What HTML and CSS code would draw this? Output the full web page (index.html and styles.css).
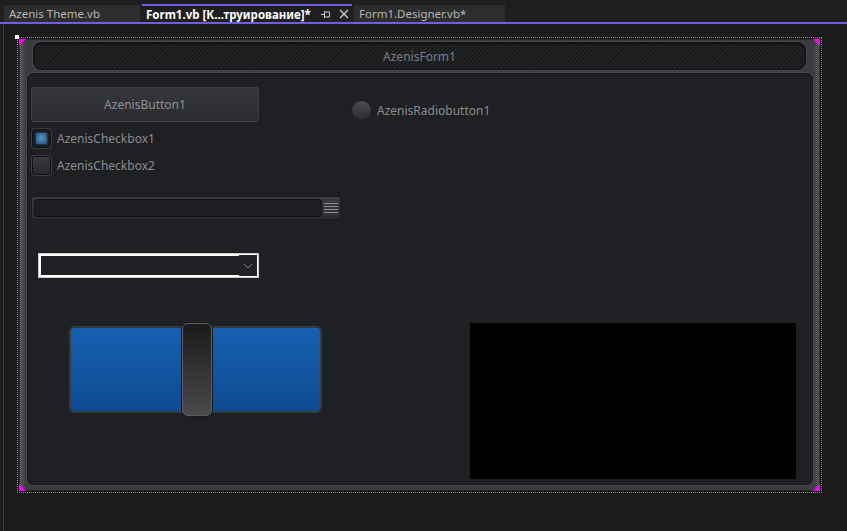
FILE: index.html
```html
<!DOCTYPE html>
<html>
<head>
<meta charset="utf-8">
<link rel="stylesheet" href="styles.css">
</head>
<body>
<div class="tabs">
  <div class="tab tab-first">Azenis Theme.vb</div>
  <div class="tab tab-active">
    <span class="tab-title">Form1.vb [К...труирование]*</span>
    <svg class="pin" width="10" height="10" viewBox="0 0 10 10"><path d="M0 5.5H3.5M3.5 2V9M3.5 3H8.5V8H3.5" fill="none" stroke="#d0d0d0" stroke-width="1"/></svg>
    <svg class="close" width="10" height="10" viewBox="0 0 10 10"><path d="M1 1L9 9M9 1L1 9" stroke="#d0d0d0" stroke-width="1.3"/></svg>
  </div>
  <div class="tab tab-other">Form1.Designer.vb*</div>
</div>
<div class="surface">
  <div class="workspace">
    <div class="selection">
      <span class="handle"></span>
      <div class="form">
        <span class="key key-tl"></span>
        <span class="key key-tr"></span>
        <span class="key key-bl"></span>
        <span class="key key-br"></span>
        <div class="titlebar">AzenisForm1</div>
        <div class="canvas">
          <div class="ctl button">AzenisButton1</div>
          <div class="ctl check check1"><span class="box box-on"><span class="tick"></span></span><span class="label">AzenisCheckbox1</span></div>
          <div class="ctl check check2"><span class="box"></span><span class="label">AzenisCheckbox2</span></div>
          <div class="ctl radio"><span class="dot"></span><span class="label">AzenisRadiobutton1</span></div>
          <div class="ctl textbox">
            <span class="field"></span>
            <svg class="grip" width="14" height="13" viewBox="0 0 14 13"><path d="M0 1.5H14M0 4.5H14M0 7.5H14M0 10.5H14" stroke="#8a8b8f" stroke-width="1"/></svg>
          </div>
          <div class="ctl combo">
            <span class="combo-field"></span>
            <span class="combo-btn"><svg width="10" height="6" viewBox="0 0 10 6"><path d="M1 1L5 5L9 1" fill="none" stroke="#8c8c8c" stroke-width="1"/></svg></span>
          </div>
          <div class="ctl slider"><span class="thumb"></span></div>
          <div class="ctl panel"></div>
        </div>
      </div>
    </div>
  </div>
</div>
</body>
</html>
```
FILE: styles.css
```css
* { box-sizing: border-box; }
html, body { margin: 0; height: 100%; }
body {
  background: #1b1b1b;
  font-family: "Noto Sans", "Open Sans", sans-serif;
  font-size: 12px;
  overflow: hidden;
  display: flex;
  flex-direction: column;
}
.tabs {
  display: flex;
  align-items: flex-end;
  height: 24px;
  background: #1f1f1f;
  border-bottom: 2px solid #6f5fe0;
  padding-left: 4px;
  gap: 2px;
}
.tab {
  height: 17px;
  display: flex;
  align-items: center;
  white-space: nowrap;
  color: #b4b4b4;
  font-size: 11.5px;
}
.tab-first { width: 136px; background: #2d2d2d; padding-left: 5px; }
.tab-active {
  width: 210px;
  height: 18px;
  border-top: 2px solid #6f5fe0;
  background: #1f1f1f;
  color: #ffffff;
  font-weight: 700;
  padding-left: 4px;
}
.tab-title { flex: none; }
.pin { margin-left: 10px; }
.close { margin-left: 8px; }
.tab-other { width: 151px; background: #2d2d2d; padding-left: 5px; }

.surface { flex: 1; padding-left: 3px; }
.workspace {
  height: 100%;
  border-left: 1px solid #3a3a3a;
  padding: 13px 0 0 13px;
}
.selection {
  position: relative;
  width: 805px;
  height: 456px;
  border: 1px dotted #8c8c8c;
  padding: 1px;
}
.handle {
  position: absolute;
  left: -3px;
  top: -3px;
  width: 4px;
  height: 4px;
  background: #ffffff;
}
.form {
  position: relative;
  height: 100%;
  border-radius: 6px;
  border: 1px solid #2a2b2e;
  background:
    linear-gradient(to right, #5c5d62 0, #47484c 3px, #3b3c40 6px, #3b3c40 calc(100% - 6px), #47484c calc(100% - 3px), #57585d 100%);
  padding: 2px 6px 5px 7px;
  display: flex;
  flex-direction: column;
  gap: 3px;
}
.key {
  position: absolute;
  width: 7px;
  height: 7px;
  background: #ff00ff;
  z-index: 2;
}
.key-tl { left: -1px; top: -1px; clip-path: polygon(0 0, 100% 0, 0 100%); }
.key-tr { right: -1px; top: -1px; clip-path: polygon(0 0, 100% 0, 100% 100%); }
.key-bl { left: -1px; bottom: -1px; clip-path: polygon(0 0, 100% 100%, 0 100%); }
.key-br { right: -1px; bottom: -1px; clip-path: polygon(100% 0, 100% 100%, 0 100%); }

.titlebar {
  margin: 0 7px 0 6px;
  height: 28px;
  border-radius: 8px;
  border: 1px solid #141416;
  background:
    repeating-linear-gradient(135deg, #19191b 0 1.5px, #242527 1.5px 3px);
  box-shadow: inset 0 1px 2px rgba(0,0,0,0.6), 0 0 0 1px #44454a;
  color: #7a7d86;
  display: flex;
  align-items: center;
  justify-content: center;
  font-size: 12px;
}
.canvas {
  position: relative;
  flex: 1;
  background: #1f2023;
  border-radius: 6px;
  border: 1px solid #17181a;
  box-shadow: 0 0 0 1px #46474b;
}
.ctl { position: absolute; }
.label { color: #8a8b8f; white-space: nowrap; }

.button {
  left: 3px; top: 13px;
  width: 228px; height: 35px;
  border-radius: 2px;
  border: 1px solid #3e3f43;
  background: linear-gradient(#36373a, #2b2c2f);
  color: #8e8f93;
  display: flex;
  align-items: center;
  justify-content: center;
}
.check { left: 4px; display: flex; align-items: center; gap: 6px; height: 19px; }
.check1 { top: 55px; }
.check2 { top: 82px; }
.box {
  width: 19px; height: 19px;
  border-radius: 3px;
  border: 1px solid #111214;
  box-shadow: 0 0 0 1px #3c3d41;
  background: linear-gradient(#3a3b3e, #28292c);
  display: flex;
  align-items: center;
  justify-content: center;
}
.box-on { background: #1c1d20; }
.tick {
  width: 11px; height: 11px;
  border-radius: 1px;
  background: radial-gradient(circle at 50% 45%, #5d9ec4 0, #3c76a0 45%, #244f74 100%);
  box-shadow: 0 0 0 1px #1a3550;
}
.radio { left: 323px; top: 25px; display: flex; align-items: center; gap: 5px; height: 22px; }
.dot {
  width: 21px; height: 21px;
  border-radius: 50%;
  border: 1px solid #161719;
  background: linear-gradient(#4c4d51, #2a2b2e);
  box-shadow: 0 1px 0 #2f3034;
}
.textbox {
  left: 3px; top: 122px;
  width: 310px; height: 24px;
  border-radius: 3px;
  border: 1px solid #1a1b1d;
  background: linear-gradient(#3c3d41, #2c2d30);
  display: flex;
  align-items: center;
  padding: 2px;
  gap: 2px;
}
.field {
  flex: 1;
  height: 18px;
  border-radius: 3px;
  border: 1px solid #111214;
  background: #1e1f22;
}
.grip { flex: none; }
.combo {
  left: 10px; top: 179px;
  width: 221px; height: 25px;
  border: 1px solid #cfcfcf;
  background: #ffffff;
  display: flex;
  padding: 2px 1px 2px 2px;
}
.combo-field { flex: 1; background: #1f2023; }
.combo-btn {
  width: 18px;
  margin: -1px 0;
  background: #202124;
  display: flex;
  align-items: center;
  justify-content: center;
}
.slider {
  left: 42px; top: 253px;
  width: 251px; height: 85px;
  border-radius: 4px;
  border: 1px solid #2e3a4a;
  box-shadow: 0 0 0 1px #3a3b3f;
  background: linear-gradient(#1660b0, #0f4b93);
}
.thumb {
  position: absolute;
  left: 111px; top: -5px;
  width: 30px; height: 93px;
  border-radius: 6px;
  border: 1px solid #5c5d61;
  background: linear-gradient(#1b1b1c, #4a4a4c);
  box-shadow: 0 0 0 1px #1a1a1b;
}
.panel {
  left: 442px; top: 249px;
  width: 326px; height: 156px;
  background: #000000;
}
```
